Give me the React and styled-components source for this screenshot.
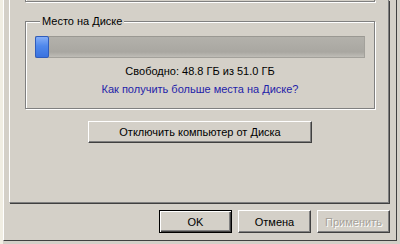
import styled, { createGlobalStyle } from "styled-components";

const GlobalStyle = createGlobalStyle`
  html, body {
    margin: 0;
    padding: 0;
  }
  body {
    background: #d4d0c8;
    font-family: "Liberation Sans", Arial, sans-serif;
    font-size: 11px;
    color: #000;
  }
`;

const Screen = styled.div`
  display: flex;
  width: 400px;
  height: 244px;
  overflow: hidden;
  background: #d4d0c8;
`;

const DesktopEdge = styled.div`
  flex: none;
  width: 3px;
  background: #f1eee3;
`;

const Window = styled.div`
  flex: none;
  width: 394px;
  display: flex;
  flex-direction: column;
  height: 241px;
  box-sizing: border-box;
  border-left: 1px solid #fff;
  border-right: 1px solid #404040;
  border-bottom: 1px solid #404040;
  padding: 0 6px 0 5px;
`;

const TabPage = styled.div`
  flex: none;
  display: flex;
  flex-direction: column;
  height: 203px;
  margin-right: 1px;
  box-sizing: border-box;
  border-left: 1px solid #fff;
  border-right: 1px solid #808080;
  border-bottom: 1px solid #808080;
  box-shadow: 1px 1px 0 #404040;
  padding: 0 13px 0 15px;
`;

const PrevGroupEnd = styled.div`
  height: 1px;
  border: 1px solid #808080;
  border-top: none;
  box-shadow: inset 1px 0 #fff, 1px 1px #fff;
`;

const GroupBox = styled.fieldset`
  margin: 13px 0 0;
  padding: 0 9px 12px 9px;
  min-width: 0;
  border: 1px solid #808080;
  box-shadow: inset 1px 1px #fff, 1px 1px #fff;
`;

const GroupTitle = styled.legend`
  margin-left: 5px;
  padding: 0 2px;
  line-height: 13px;
  background: #d4d0c8;
`;

const Meter = styled.div`
  display: flex;
  margin-top: 8px;
  height: 22px;
  box-sizing: border-box;
  border: 1px solid #a3a19b;
  border-top-color: #9a9892;
  background: linear-gradient(#b3b1ab, #a9a7a1 75%, #bfbdb7);
`;

const MeterFill = styled.div`
  margin: -1px 0 -1px -1px;
  box-sizing: border-box;
  border: 1px solid #2f5cbc;
  border-radius: 2px;
  background: linear-gradient(#86aef6, #4f88ec 45%, #3a72df);
`;

const FreeText = styled.div`
  margin-top: 7px;
  line-height: 13px;
  text-align: center;
`;

const HelpLink = styled.a`
  display: block;
  margin-top: 5px;
  line-height: 13px;
  text-align: center;
  color: #1f22a8;
  text-decoration: none;
  cursor: pointer;
`;

const Button = styled.button`
  box-sizing: border-box;
  height: ${(p) => (p.$tall ? "23px" : "22px")};
  width: ${(p) => p.$width || "73px"};
  padding: 0;
  font-family: inherit;
  font-size: 11px;
  background: #d4d0c8;
  color: ${(p) => (p.disabled ? "#a6a29a" : "#000")};
  text-shadow: ${(p) => (p.disabled ? "1px 1px 0 #fff" : "none")};
  border: 1px solid;
  border-color: ${(p) => (p.$default ? "#000" : "#fff #404040 #404040 #fff")};
  box-shadow: ${(p) =>
    p.$default
      ? "inset 1px 1px #fff, inset -1px -1px #404040, inset -2px -2px #808080"
      : "inset -1px -1px #808080"};
`;

const CenterButton = styled(Button)`
  align-self: center;
  margin-top: 12px;
`;

const ButtonRow = styled.div`
  display: flex;
  justify-content: flex-end;
  gap: 6px;
  margin-top: 7px;
`;

const disk = { used: 2.2, total: 51.0, free: 48.8 };

export default function App() {
  const fill = (disk.used / disk.total) * 100;
  return (
    <Screen>
      <GlobalStyle />
      <DesktopEdge />
      <Window>
        <TabPage>
          <PrevGroupEnd />
          <GroupBox>
            <GroupTitle>Место на Диске</GroupTitle>
            <Meter>
              <MeterFill style={{ width: `${fill}%` }} />
            </Meter>
            <FreeText>
              Свободно: {disk.free.toFixed(1)} ГБ из {disk.total.toFixed(1)} ГБ
            </FreeText>
            <HelpLink>Как получить больше места на Диске?</HelpLink>
          </GroupBox>
          <CenterButton $width="224px">Отключить компьютер от Диска</CenterButton>
        </TabPage>
        <ButtonRow>
          <Button $tall $default>
            OK
          </Button>
          <Button $tall>Отмена</Button>
          <Button $tall disabled>
            Применить
          </Button>
        </ButtonRow>
      </Window>
    </Screen>
  );
}
